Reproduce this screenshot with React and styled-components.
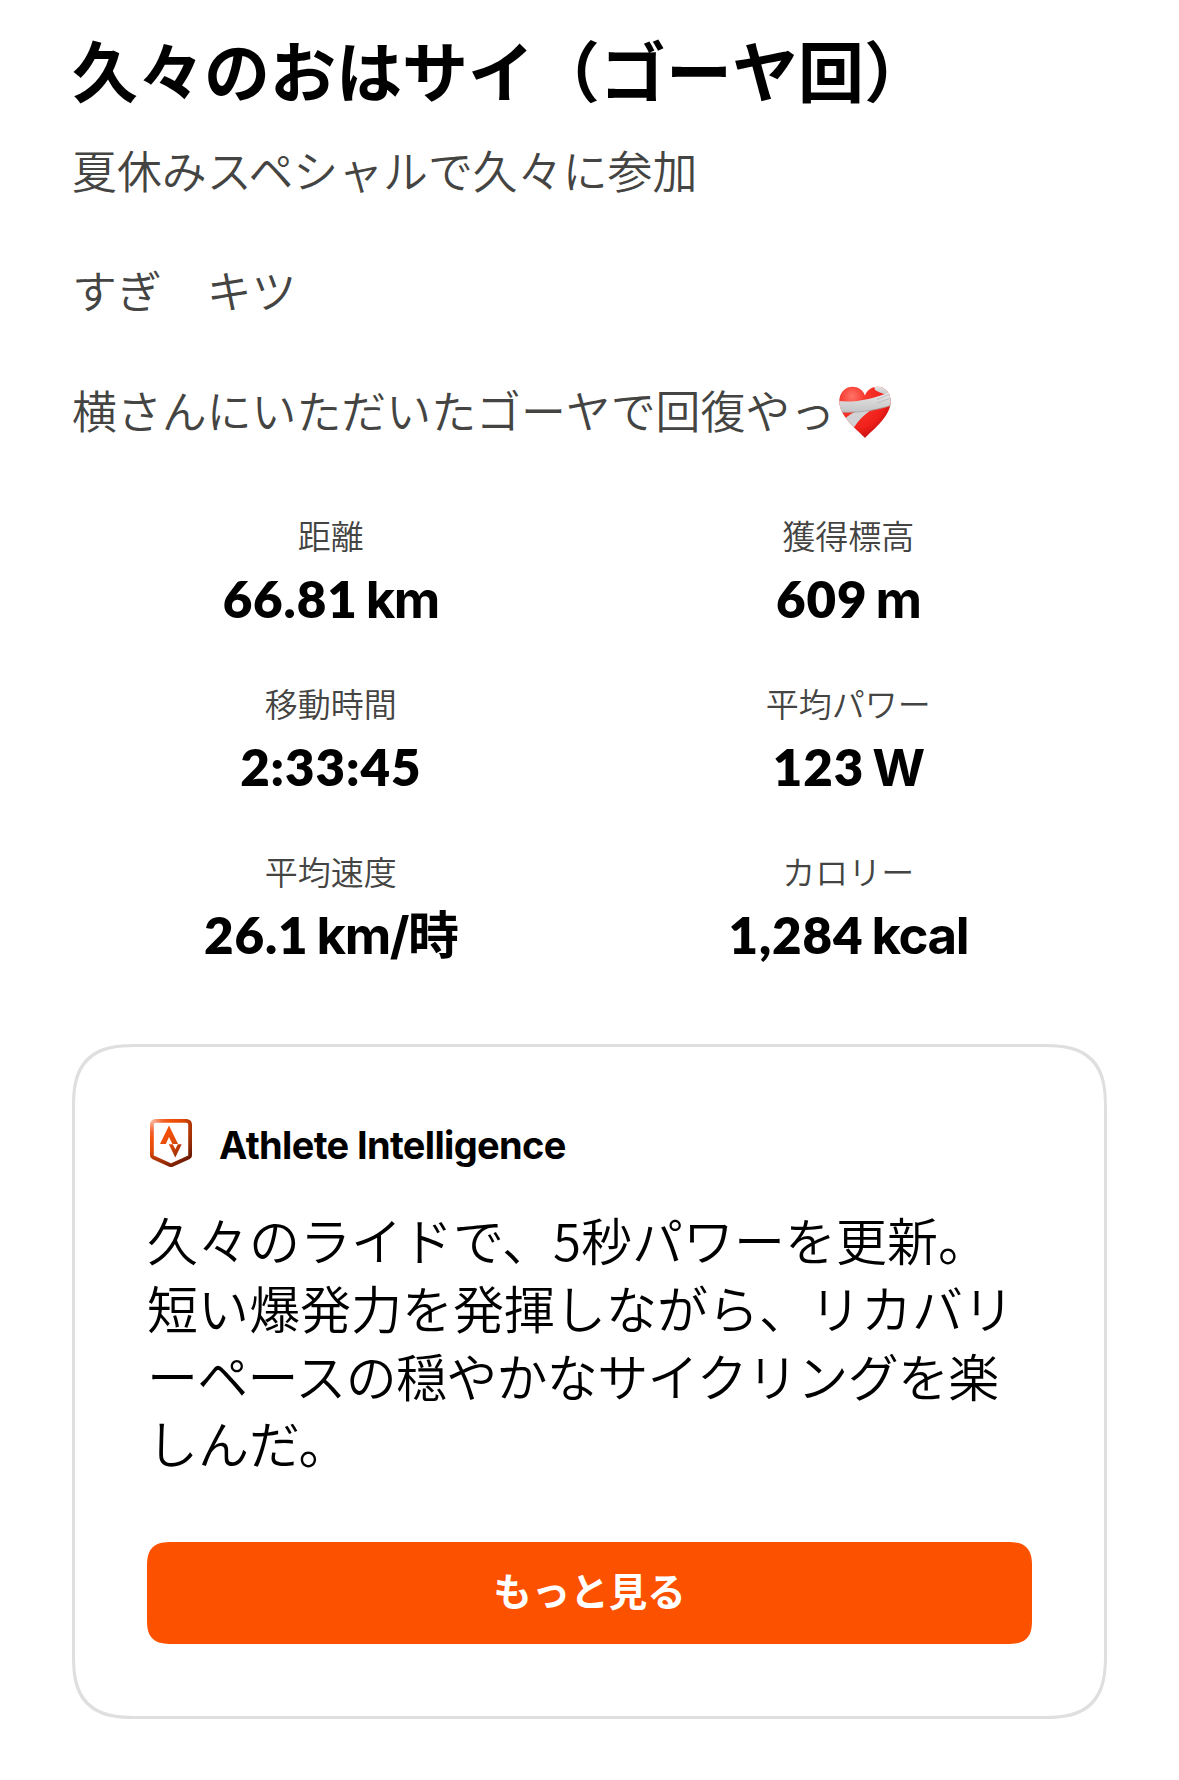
import React from "react";
import styled, { createGlobalStyle } from "styled-components";

const stats = [
  { label: "距離", value: "66.81", unit: " km" },
  { label: "獲得標高", value: "609", unit: " m" },
  { label: "移動時間", value: "2:33:45" },
  { label: "平均パワー", value: "123", unit: " W" },
  { label: "平均速度", value: "26.1", unit: " km/時" },
  { label: "カロリー", value: "1,284", unit: " kcal" },
];

//summary is split by hand, "ー" is allowed to start a line
const summary = [
  { text: "久々のライドで、5秒パワーを更新。", tracking: 0 },
  { text: "短い爆発力を発揮しながら、リカバリ", tracking: 0 },
  { text: "ーペースの穏やかなサイクリングを楽", tracking: -0.7 },
  { text: "しんだ。", tracking: 0 },
];

const MendingHeart = () => (
  <HeartSvg viewBox="0 0 52 52" role="img" aria-label="mending heart">
    <defs>
      <radialGradient id="heartRed" cx="0.25" cy="0.2" r="0.85">
        <stop offset="0" stopColor="#ff7468" />
        <stop offset="0.3" stopColor="#f7362c" />
        <stop offset="0.75" stopColor="#f0201a" />
        <stop offset="1" stopColor="#c40f12" />
      </radialGradient>
      <linearGradient id="bandage" x1="0" y1="0" x2="0" y2="1">
        <stop offset="0" stopColor="#e9e9e9" />
        <stop offset="1" stopColor="#c4c4c6" />
      </linearGradient>
      <clipPath id="heartShape">
        <path d="M26 52C21 46 1 32 0.3 16C0 7 6 0.8 13.500 0.800C19 0.800 24 4 26 9.500C28 4 33 0.800 38.500 0.800C46 0.800 52 7 51.700 16C51 32 31 46 26 52Z" />
      </clipPath>
    </defs>
    <g clipPath="url(#heartShape)">
      <rect width="52" height="52" fill="url(#heartRed)" />
      <path d="M35 0L53 -1L53 9C46 9 41 7 36 4Z" fill="url(#bandage)" />
      <path d="M28 22L36 22C28 26 20 33 14 43L4 34C11 28 18 24 28 22Z" fill="#d2d2d4" />
      <path d="M-1 15C15 17 35 13 53 5L53 19C36 25 17 27 1 26Z" fill="url(#bandage)" />
      <path d="M38 13.500L51 8M38 17L52 12" stroke="#b9b9bc" strokeWidth="0.8" fill="none" />
      <path d="M1 26C17 27 36 25 53 19" stroke="#a8a3a5" strokeWidth="0.8" fill="none" />
    </g>
  </HeartSvg>
);

const IntelligenceLogo = () => (
  <LogoSvg viewBox="0 0 42 48" aria-hidden="true">
    <defs>
      <radialGradient id="logoFill" gradientUnits="userSpaceOnUse" cx="2" cy="2" r="52">
        <stop offset="0" stopColor="#fbb9a3" />
        <stop offset="0.2" stopColor="#f2642f" />
        <stop offset="0.36" stopColor="#f25008" />
        <stop offset="0.58" stopColor="#e04a08" />
        <stop offset="1" stopColor="#6d1a02" />
      </radialGradient>
    </defs>
    <path
      d="M5.500 1.900H36.500A3.600 3.600 0 0 1 40.100 5.500V36.500Q40.100 37.600 39 38.200L22.500 45.700Q21 46.400 19.500 45.700L3 38.200Q1.900 37.600 1.900 36.500V5.500A3.600 3.600 0 0 1 5.500 1.900Z"
      fill="none"
      stroke="url(#logoFill)"
      strokeWidth="3.8"
    />
    <path d="M19 6.500L28 25H22.400L19 18L15.800 25H10Z" fill="url(#logoFill)" />
    <path d="M18.800 25.300H22.800L25.300 30.200L27.800 25.300H31.700L25.300 38.500Z" fill="url(#logoFill)" />
  </LogoSvg>
);

export default function App() {
  return (
    <Wrapper>
      <GlobalStyle />
      <Title>久々のおはサイ（ゴーヤ回）</Title>
      <Description>
        <p>夏休みスペシャルで久々に参加</p>
        <p>すぎ　キツ</p>
        <p>
          横さんにいただいたゴーヤで回復やっ
          <MendingHeart />
        </p>
      </Description>
      <StatGrid>
        {stats.map((stat) => (
          <Stat key={stat.label}>
            <StatLabel>{stat.label}</StatLabel>
            <StatValue>
              {stat.value}
              {stat.unit && <Unit>{stat.unit}</Unit>}
            </StatValue>
          </Stat>
        ))}
      </StatGrid>
      <Card>
        <CardHeader>
          <IntelligenceLogo />
          <CardTitle>Athlete Intelligence</CardTitle>
        </CardHeader>
        <Summary>
          {summary.map((line) => (
            <SummaryLine key={line.text} $tracking={line.tracking}>
              {line.text}
            </SummaryLine>
          ))}
        </Summary>
        <MoreButton>もっと見る</MoreButton>
      </Card>
    </Wrapper>
  );
}

const GlobalStyle = createGlobalStyle`
  * {
    box-sizing: border-box;
  }
  body {
    margin: 0;
    background-color: #fff;
    font-family: "Noto Sans CJK JP", sans-serif;
    font-weight: 350;
    color: #000;
  }
  h1, h2, p {
    margin: 0;
  }
`;
const Wrapper = styled.div`
  width: 1179px;
  height: 1780px;
  padding: 28px 72px 0;
  overflow: hidden;
  background-color: #fff;
`;
const Title = styled.h1`
  font-size: 66px;
  font-weight: 700;
  line-height: 80px;
  white-space: nowrap;
`;
const Description = styled.div`
  display: flex;
  flex-direction: column;
  gap: 60px;
  margin-top: 32px;
  color: #444442;
  font-size: 44.9px;
  line-height: 60px;
  white-space: nowrap;
`;
const HeartSvg = styled.svg`
  width: 52px;
  height: 52px;
  margin-left: 4px;
  vertical-align: -9px;
`;
const StatGrid = styled.div`
  display: grid;
  grid-template-columns: 1fr 1fr;
  row-gap: 52px;
  margin-top: 73px;
`;
const Stat = styled.div`
  display: flex;
  flex-direction: column;
  align-items: center;
  gap: 12px;
`;
const StatLabel = styled.div`
  color: #444442;
  font-size: 33px;
  line-height: 44px;
`;
const StatValue = styled.div`
  font-family: Lato, "Noto Sans CJK JP", sans-serif;
  font-size: 51px;
  font-weight: 800;
  letter-spacing: 0.9px;
  line-height: 60px;
  white-space: pre;
`;
const Unit = styled.span`
  font-family: Inter, "Noto Sans CJK JP", sans-serif;
  font-size: 51px;
  font-weight: 700;
  letter-spacing: -1.5px;
  line-height: 1;
  word-spacing: -2.5px;
`;
const Card = styled.section`
  height: 675px;
  margin-top: 79px;
  padding: 69px 72px 0;
  border: 3px solid #dfdfdf;
  border-radius: 52px;

  @supports (corner-shape: superellipse(1.5)) {
    border-radius: 66px;
    corner-shape: superellipse(1.5);
  }
`;
const CardHeader = styled.div`
  display: flex;
  align-items: center;
  gap: 27px;
  height: 54px;
  padding-left: 3px;
`;
const LogoSvg = styled.svg`
  width: 42px;
  height: 48px;
`;
const CardTitle = styled.h2`
  padding-top: 4px;
  font-family: Inter, sans-serif;
  font-size: 38px;
  font-weight: 700;
  letter-spacing: -0.65px;
  line-height: 46px;
`;
const Summary = styled.div`
  margin-top: 36px;
  font-size: 51px;
  line-height: 67.8px;
  white-space: nowrap;
`;
const SummaryLine = styled.div`
  letter-spacing: ${({ $tracking }) => $tracking}px;
`;
const MoreButton = styled.button`
  display: block;
  width: 100%;
  height: 102px;
  margin-top: 65px;
  padding: 0 0 8px;
  border: none;
  border-radius: 18px;
  background-color: #fc5200;
  color: #fff;
  font-family: inherit;
  font-size: 38.5px;
  font-weight: 700;
  line-height: 94px;

  @supports (corner-shape: superellipse(1.5)) {
    border-radius: 25px;
    corner-shape: superellipse(1.5);
  }
`;
